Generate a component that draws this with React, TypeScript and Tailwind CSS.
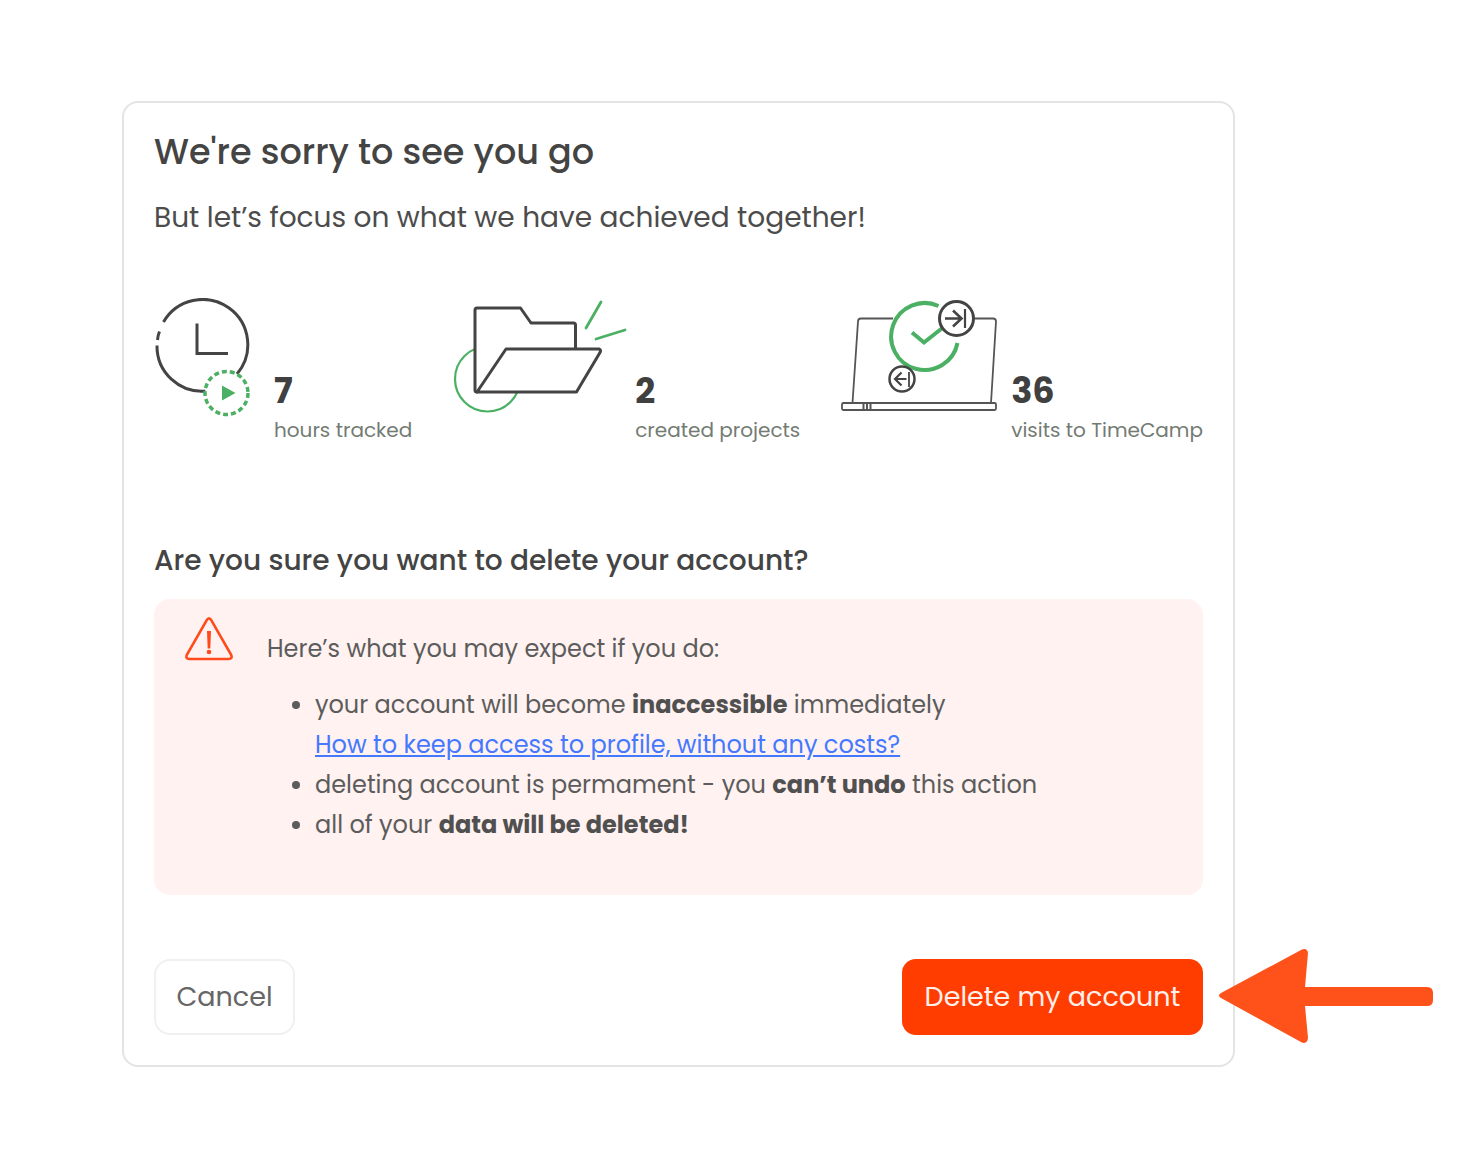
import type { ReactNode } from 'react';

interface StatProps {
  icon: ReactNode;
  value: number;
  label: string;
}

function ClockIcon() {
  return (
    <svg width="120" height="120" viewBox="0 0 120 120" fill="none" aria-hidden="true">
      <g stroke="#444444" strokeWidth="3">
        <path d="M9.500 24 A45.200 45.200 0 1 1 83 76" />
        <path d="M3 47.500 A45 45 0 0 0 52 93" />
        <path d="M5.500 33.500 Q4 37 3.500 42" />
        <path d="M43 25.500 V55.500 H74" />
      </g>
      <circle cx="72.500" cy="95" r="21.500" fill="white" stroke="#4bb063" strokeWidth="3.500" strokeDasharray="5 3" />
      <path d="M68 87.500 L81.500 95 L68 102.500 Z" fill="#4bb063" />
    </svg>
  );
}

function FolderIcon() {
  return (
    <svg width="182" height="120" viewBox="0 0 182 120" fill="none" strokeLinejoin="round" strokeLinecap="round" aria-hidden="true">
      <circle cx="34.500" cy="81" r="32.500" stroke="#4bb063" strokeWidth="2.200" />
      <path d="M22 10 H67.500 L78 25 H121 Q123 25 123 27 V52 L97 94 H24 Q22 94 22 92 Z" fill="white" stroke="none" />
      <path d="M122.500 51 V27 Q122.500 25 120.500 25 H78 L67.500 10 H24 Q22 10 22 12 V92 Q22 94 24 94" stroke="#444444" strokeWidth="3" />
      <path d="M24 94 L53 51 H146 Q148.500 52 147 54.500 L123.500 94 Z" fill="white" stroke="#444444" strokeWidth="3" />
      <path d="M133 30 L148 4 M143 41 L172 32" stroke="#4bb063" strokeWidth="2.800" />
    </svg>
  );
}

function LaptopIcon() {
  return (
    <svg width="170" height="120" viewBox="0 0 170 120" fill="none" aria-hidden="true">
      <g stroke="#555555" strokeWidth="1.800">
        <path d="M52 20.500 H20 Q17 20.500 17 23.500 L11.500 105" />
        <path d="M132 20.500 H152 Q155 20.500 155 23.500 L150 105" />
        <rect x="1" y="105" width="154" height="7" rx="1.500" />
        <path d="M22.500 105 V112 M26 105 V112 M29.500 105 V112" strokeWidth="2" />
      </g>
      <g stroke="#4bb063" strokeWidth="4">
        <path d="M97.500 8 A33.500 33.500 0 1 0 116.500 45" />
        <path d="M71 34.500 L83 44.500 L102 29.500" />
      </g>
      <circle cx="115.500" cy="20.500" r="17" fill="white" stroke="#444444" strokeWidth="3" />
      <path d="M104 20.500 H120 M112 12.500 L120.500 20.500 L112 28.500" stroke="#444444" strokeWidth="2.600" />
      <path d="M124 11 V30" stroke="#444444" strokeWidth="2.200" />
      <circle cx="61" cy="81" r="12.500" fill="white" stroke="#444444" strokeWidth="2.500" />
      <path d="M65.500 81 H54.500 M60.500 74.500 L54 81 L60.500 87.500" stroke="#444444" strokeWidth="2.200" />
      <path d="M68 74 V89" stroke="#444444" strokeWidth="1.800" />
    </svg>
  );
}

function WarningIcon() {
  return (
    <svg width="48" height="44" viewBox="0 0 48 44" fill="none" className="shrink-0" aria-hidden="true">
      <path
        d="M21.600 3.300 Q24 -0.500 26.400 3.300 L46 37.500 Q48 42 43.500 42 H4.500 Q0 42 2 37.500 Z"
        stroke="#ff4a1c"
        strokeWidth="2.600"
      />
      <path d="M22 14 H26 L25.300 31.500 H22.700 Z" fill="#ff4a1c" />
      <circle cx="24" cy="35" r="2.300" fill="#ff4a1c" />
    </svg>
  );
}

function PointerArrow() {
  return (
    <svg
      width="214"
      height="96"
      viewBox="0 0 214 96"
      className="absolute top-1/2 left-full ml-4 -translate-y-1/2"
      aria-hidden="true"
    >
      <path
        d="M2 44 L82 1 Q88 -2 89 4 L86 38 H208 Q214 38 214 44 V51 Q214 57 208 57 H86 L89 89 Q88 96 82 93 L2 49 Q-2 46.500 2 44 Z"
        fill="#ff511a"
      />
    </svg>
  );
}

function Stat({ icon, value, label }: StatProps) {
  return (
    <div className="flex">
      {icon}
      <div className="mt-[73px] whitespace-nowrap">
        <p className="text-[35px] leading-10 font-bold text-[#404040]">{value}</p>
        <p className="text-xl leading-[38px] text-[#737b73]">{label}</p>
      </div>
    </div>
  );
}

export default function App() {
  return (
    <main className="min-h-screen bg-white pt-[101px] pr-[230px] pb-[106px] pl-[122px] font-[Poppins,Inter,sans-serif] text-[#444444]">
      <section className="rounded-2xl border-2 border-[#e4e4e4] px-[30px] pt-[25px] pb-[30px]">
        <h1 className="text-[35px] leading-12 font-medium">We're sorry to see you go</h1>
        <p className="mt-[22px] text-[28px] leading-10 text-[#4c4c4c]">But let’s focus on what we have achieved together!</p>

        <div className="mt-[60px] flex justify-between">
          <Stat icon={<ClockIcon />} value={7} label="hours tracked" />
          <Stat icon={<FolderIcon />} value={2} label="created projects" />
          <Stat icon={<LaptopIcon />} value={36} label="visits to TimeCamp" />
        </div>

        <h2 className="mt-[92px] text-[28px] leading-10 font-medium">Are you sure you want to delete your account?</h2>

        <div className="mt-[18px] flex gap-[34px] rounded-2xl bg-[#fff2f0] px-[31px] pt-[18px] pb-[50px] text-2xl leading-10 text-[#5c5c5c]">
          <WarningIcon />
          <div className="pt-3">
            <p>Here’s what you may expect if you do:</p>
            <ul className="mt-4 list-disc pl-12">
              <li>
                your account will become <strong className="text-[#505050]">inaccessible</strong> immediately
                <br />
                <a href="#keep-access" className="text-[#4479ff] underline">
                  How to keep access to profile, without any costs?
                </a>
              </li>
              <li>
                deleting account is permament - you <strong className="text-[#505050]">can’t undo</strong> this action
              </li>
              <li>
                all of your <strong className="text-[#505050]">data will be deleted!</strong>
              </li>
            </ul>
          </div>
        </div>

        <div className="mt-16 flex items-center justify-between">
          <button type="button" className="h-19 w-[141px] rounded-2xl border-2 border-[#f0f0f0] text-[27px] text-[#666666]">
            Cancel
          </button>
          <div className="relative">
            <button type="button" className="h-19 w-[301px] rounded-[14px] bg-[#ff3d00] text-[27px] text-[#fff0eb]">
              Delete my account
            </button>
            <PointerArrow />
          </div>
        </div>
      </section>
    </main>
  );
}
